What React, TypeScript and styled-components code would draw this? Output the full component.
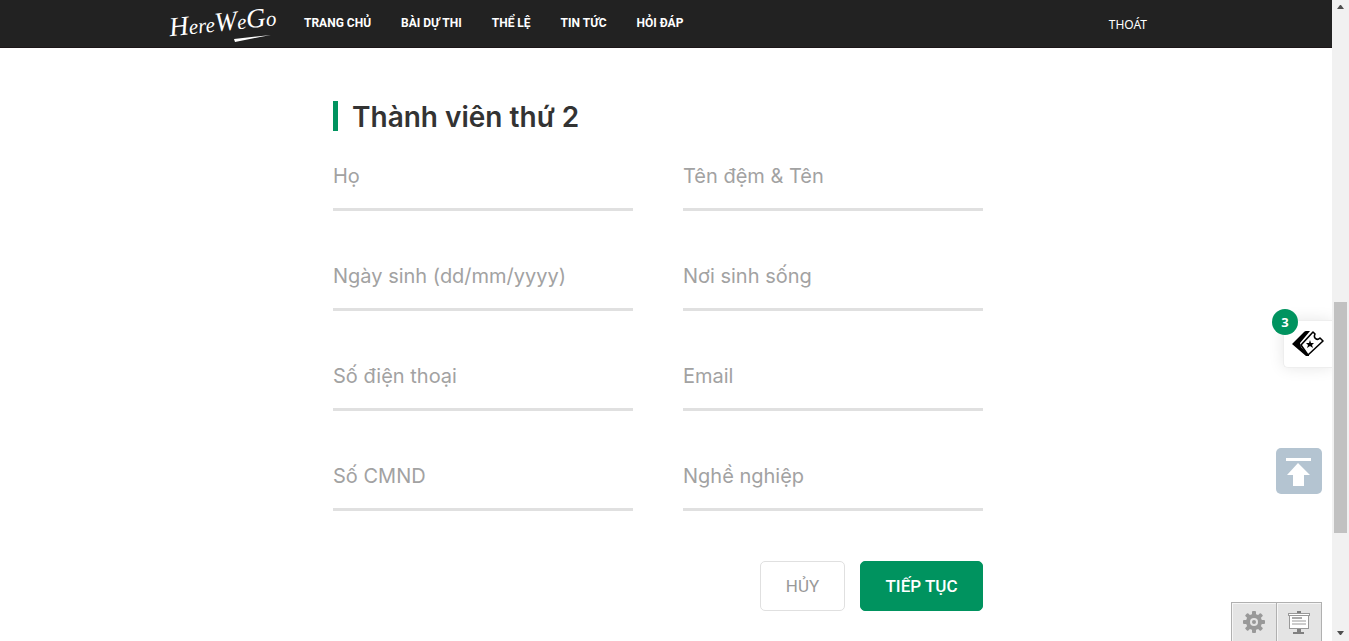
import React from "react";
import styled, { createGlobalStyle } from "styled-components";

const GlobalStyle = createGlobalStyle`
  *, *::before, *::after { box-sizing: border-box; }
  body {
    margin: 0;
    background: #fff;
    color: #333;
    font-family: Roboto, "Liberation Sans", sans-serif;
  }
`;

const Shell = styled.div`
  display: grid;
  grid-template-columns: minmax(0, 1fr) 17px;
  height: 100vh;
  overflow: hidden;
`;

const Page = styled.div`
  min-width: 0;
`;

const Header = styled.header`
  height: 48px;
  background: #222;
  border-bottom: 1px solid #1c1618;
`;

const HeaderInner = styled.div`
  display: flex;
  align-items: center;
  max-width: 1000px;
  height: 45px;
  margin: 0 auto;
  padding-right: 19px;
`;

const Logo = styled.a`
  position: relative;
  flex: none;
  width: 108px;
  height: 42px;
  color: #fff;
  text-decoration: none;
`;

const Wordmark = styled.span`
  display: block;
  width: 108px;
  padding-left: 3px;
  font: italic 400 21px/40px "Liberation Serif", serif;
  white-space: nowrap;
  transform: rotate(-6deg);
`;

const Capital = styled.span`
  font-size: 27px;
`;

const Swoosh = styled.svg`
  position: absolute;
  left: 68px;
  bottom: 2px;
`;

const Nav = styled.nav`
  display: flex;
  gap: 30px;
  flex: 1;
  margin-left: 30px;
`;

const NavLink = styled.a`
  color: #fff;
  font: 700 12px/20px Roboto, sans-serif;
  text-decoration: none;
  white-space: nowrap;
`;

const LogoutLink = styled(NavLink)`
  padding-top: 4px;
  font: 400 12px/20px "Noto Sans", sans-serif;
`;

const Main = styled.main`
  max-width: 666px;
  margin: 0 auto;
  padding: 53px 16px 30px 0;
`;

const Title = styled.h1`
  margin: 0;
  padding-left: 14px;
  border-left: 5px solid #00935f;
  color: #333;
  font: 600 28px/32px Inter, sans-serif;
  height: 30px;
`;

const Fields = styled.div`
  display: grid;
  grid-template-columns: 1fr 1fr;
  gap: 40px 50px;
  padding-top: 20px;
`;

const Input = styled.input`
  width: 100%;
  height: 60px;
  padding: 0 0 8px;
  border: 0;
  border-bottom: 3px solid #e0e0e0;
  border-radius: 0;
  background: transparent;
  color: #333;
  font: 400 20px/24px Inter, sans-serif;
  outline: none;
  &::placeholder { color: #a2a2a2; opacity: 1; }
`;

const Actions = styled.div`
  display: flex;
  justify-content: flex-end;
  gap: 15px;
  padding-top: 50px;
`;

const Button = styled.button<{ $primary?: boolean }>`
  min-width: ${(p) => (p.$primary ? 123 : 85)}px;
  height: 50px;
  padding: 0 20px;
  border: 1px solid ${(p) => (p.$primary ? "#00935f" : "#e0e0e0")};
  border-radius: 5px;
  background: ${(p) => (p.$primary ? "#00935f" : "#fff")};
  color: ${(p) => (p.$primary ? "#fff" : "#999")};
  font: ${(p) => (p.$primary ? 500 : 400)} 17px/24px Roboto, sans-serif;
  cursor: pointer;
`;

const TicketTab = styled.button`
  position: fixed;
  top: 320px;
  right: 17px;
  display: flex;
  align-items: center;
  width: 49px;
  height: 48px;
  padding: 0 8px;
  border: 1px solid #eee;
  border-right: 0;
  border-radius: 5px 0 0 5px;
  background: #fff;
  box-shadow: 0 0 15px rgba(0, 0, 0, 0.1);
  clip-path: inset(-20px 0 -20px -20px);
`;

const Badge = styled.span`
  position: absolute;
  top: -12px;
  left: -12px;
  width: 26px;
  height: 26px;
  border-radius: 50%;
  background: #00935f;
  color: #fff;
  font: 700 13px/26px "Open Sans", sans-serif;
  text-align: center;
`;

const ToTop = styled.button`
  position: fixed;
  top: 448px;
  right: 27px;
  display: flex;
  width: 46px;
  height: 46px;
  padding: 0;
  border: 0;
  border-radius: 5px;
  background: #b4c4d1;
`;

const Tools = styled.div`
  position: fixed;
  right: 27px;
  bottom: 0;
  display: flex;
  border: 1px solid #b0b0b0;
  border-bottom: 0;
`;

const Tool = styled.button`
  display: flex;
  justify-content: center;
  width: 44px;
  height: 38px;
  padding: 8px 0 0;
  border: 0;
  background: #e4e4e4;
  box-shadow: inset 1px 1px #f6f6f6;
  & + & { width: 45px; border-left: 1px solid #b0b0b0; }
`;

const ScrollTrack = styled.div`
  display: flex;
  flex-direction: column;
  justify-content: space-between;
  align-items: center;
  position: relative;
  padding: 5px 0 6px;
  background: #f1f1f1;
`;

const ScrollThumb = styled.div`
  position: absolute;
  top: 47.1%;
  left: 2px;
  width: 13px;
  height: 36%;
  background: #c1c1c1;
`;

const navItems = ["TRANG CHỦ", "BÀI DỰ THI", "THỂ LỆ", "TIN TỨC", "HỎI ĐÁP"];

const fields = [
  { name: "ho", label: "Họ", type: "text" },
  { name: "ten", label: "Tên đệm & Tên", type: "text" },
  { name: "ngaysinh", label: "Ngày sinh (dd/mm/yyyy)", type: "text" },
  { name: "noio", label: "Nơi sinh sống", type: "text" },
  { name: "sdt", label: "Số điện thoại", type: "tel" },
  { name: "email", label: "Email", type: "email" },
  { name: "cmnd", label: "Số CMND", type: "text" },
  { name: "nghe", label: "Nghề nghiệp", type: "text" },
];

const TicketIcon = () => (
  <svg width="32" height="28" viewBox="0 0 32 28" aria-hidden="true">
    <path d="M0 14 12 2Q13 1 14 1h4L8 13l1 4 8 8v1h-3z" fill="#000" />
    <path
      d="M9 15 21 2l2 2c-2 4 2 7 5 4l3 3-15 14z"
      fill="#fff"
      stroke="#000"
      strokeWidth="1.6"
      strokeLinejoin="round"
    />
    <path d="m18 10 1 3h3l-2 2 1 3-3-2-3 2 1-3-2-2h3z" fill="#000" />
  </svg>
);

const TopIcon = () => (
  <svg width="46" height="46" viewBox="0 0 46 46" aria-hidden="true">
    <path d="M10 10h25v3H10zM22 15 34 27h-6v11H17V27h-6z" fill="#fff" />
  </svg>
);

const GearIcon = () => (
  <svg width="22" height="22" viewBox="0 0 22 22" aria-hidden="true">
    <g fill="#999">
      <circle cx="11" cy="11" r="8" />
      {[0, 45, 90, 135].map((a) => (
        <rect key={a} x="9" width="4" height="22" rx="1" transform={`rotate(${a} 11 11)`} />
      ))}
    </g>
    <circle cx="11" cy="11" r="4" fill="#e4e4e4" />
    <circle cx="11" cy="11" r="2" fill="#999" />
  </svg>
);

const BoardIcon = () => (
  <svg width="22" height="24" viewBox="0 0 22 24" aria-hidden="true">
    <path d="M9 0h4v2H9zM9 18h4v3h3v2H5v-2h4z" fill="#808080" />
    <path d="M0 2h22v3h-1v13H1V5H0z" fill="#999" />
    <path d="M1 3h20v1H1zM2 5h18v12H2z" fill="#fff" />
    <path d="M4 6h10v2H4z" fill="#aaa" />
    <path d="M4 9h14v2H4zM4 12h14v2H4z" fill="#ccc" />
  </svg>
);

export default function App() {
  return (
    <>
      <GlobalStyle />
      <Shell>
        <Page>
          <Header>
            <HeaderInner>
              <Logo href="#">
                <Wordmark>
                  <Capital>H</Capital>ere<Capital>W</Capital>e<Capital>G</Capital>o
                </Wordmark>
                <Swoosh width="38" height="7" viewBox="0 0 38 7" aria-hidden="true">
                  <path d="M0 4 37 0 26 2 1 7z" fill="#fff" />
                </Swoosh>
              </Logo>
              <Nav>
                {navItems.map((item) => (
                  <NavLink key={item} href="#">{item}</NavLink>
                ))}
              </Nav>
              <LogoutLink href="#">THOÁT</LogoutLink>
            </HeaderInner>
          </Header>
          <Main>
            <form onSubmit={(e) => e.preventDefault()}>
              <Title>Thành viên thứ 2</Title>
              <Fields>
                {fields.map((f) => (
                  <Input key={f.name} name={f.name} type={f.type} placeholder={f.label} aria-label={f.label} />
                ))}
              </Fields>
              <Actions>
                <Button type="button">HỦY</Button>
                <Button type="submit" $primary>TIẾP TỤC</Button>
              </Actions>
            </form>
          </Main>
        </Page>
        <ScrollTrack aria-hidden="true">
          <svg width="7" height="4" viewBox="0 0 7 4"><path d="M0 4 3 0h1l3 4z" fill="#505050" /></svg>
          <ScrollThumb />
          <svg width="7" height="4" viewBox="0 0 7 4"><path d="M0 0h7L4 4H3z" fill="#505050" /></svg>
        </ScrollTrack>
      </Shell>
      <TicketTab type="button" aria-label="Bài dự thi">
        <TicketIcon />
        <Badge>3</Badge>
      </TicketTab>
      <ToTop type="button" aria-label="Lên đầu trang"><TopIcon /></ToTop>
      <Tools>
        <Tool type="button" aria-label="Cài đặt"><GearIcon /></Tool>
        <Tool type="button" aria-label="Trình chiếu"><BoardIcon /></Tool>
      </Tools>
    </>
  );
}
